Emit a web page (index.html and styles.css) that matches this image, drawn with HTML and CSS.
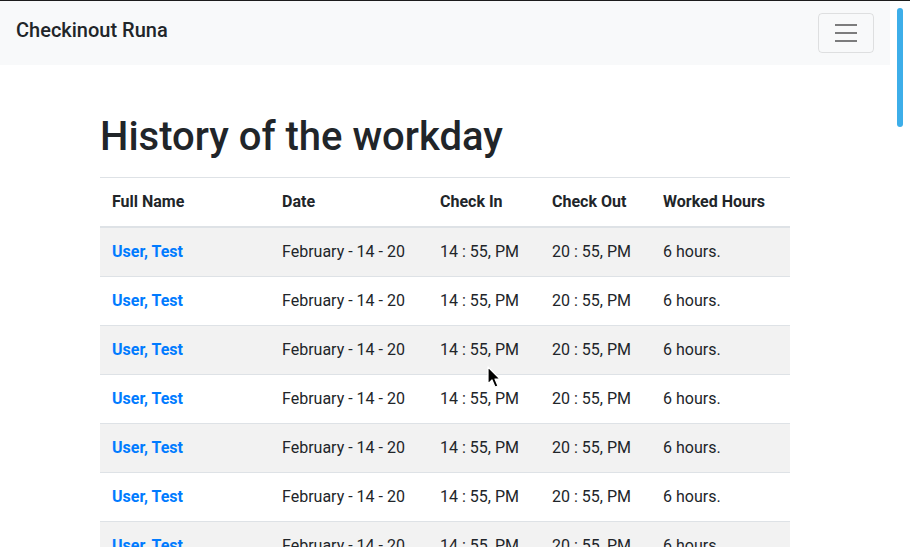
FILE: index.html
```html
<!DOCTYPE html>
<html lang="en">
<head>
<meta charset="utf-8">
<title>Checkinout Runa</title>
<link rel="stylesheet" href="styles.css">
</head>
<body>
<div class="topline"></div>
<div class="frame">
  <div class="page">
    <nav class="navbar">
      <a class="brand" href="#">Checkinout Runa</a>
      <button class="toggler" type="button" aria-label="Toggle navigation">
        <svg width="30" height="30" viewBox="0 0 30 30" aria-hidden="true">
          <path d="M4 7h22M4 15h22M4 23h22" stroke="rgba(0,0,0,0.5)" stroke-width="2" stroke-miterlimit="10"/>
        </svg>
      </button>
    </nav>
    <main class="container">
      <h1 class="title">History of the workday</h1>
      <table class="history">
        <thead>
          <tr>
            <th class="c-name">Full Name</th>
            <th class="c-date">Date</th>
            <th class="c-in">Check In</th>
            <th class="c-out">Check Out</th>
            <th class="c-hours">Worked Hours</th>
          </tr>
        </thead>
        <tbody>
          <tr><td><a href="#">User, Test</a></td><td>February - 14 - 20</td><td>14 : 55, PM</td><td>20 : 55, PM</td><td>6 hours.</td></tr>
          <tr><td><a href="#">User, Test</a></td><td>February - 14 - 20</td><td>14 : 55, PM</td><td>20 : 55, PM</td><td>6 hours.</td></tr>
          <tr><td><a href="#">User, Test</a></td><td>February - 14 - 20</td><td>14 : 55, PM</td><td>20 : 55, PM</td><td>6 hours.</td></tr>
          <tr><td><a href="#">User, Test</a></td><td>February - 14 - 20</td><td>14 : 55, PM</td><td>20 : 55, PM</td><td>6 hours.</td></tr>
          <tr><td><a href="#">User, Test</a></td><td>February - 14 - 20</td><td>14 : 55, PM</td><td>20 : 55, PM</td><td>6 hours.</td></tr>
          <tr><td><a href="#">User, Test</a></td><td>February - 14 - 20</td><td>14 : 55, PM</td><td>20 : 55, PM</td><td>6 hours.</td></tr>
          <tr><td><a href="#">User, Test</a></td><td>February - 14 - 20</td><td>14 : 55, PM</td><td>20 : 55, PM</td><td>6 hours.</td></tr>
          <tr><td><a href="#">User, Test</a></td><td>February - 14 - 20</td><td>14 : 55, PM</td><td>20 : 55, PM</td><td>6 hours.</td></tr>
        </tbody>
      </table>
    </main>
  </div>
  <div class="scrollbar"><div class="thumb"></div></div>
</div>
<svg class="cursor" width="16" height="24" viewBox="0 0 16 24" aria-hidden="true">
  <path d="M1 1 L1 18 L5 14 L8 21 L11 20 L8 13 L13 13 Z" fill="#000" stroke="#fff" stroke-width="1.2" stroke-linejoin="round"/>
</svg>
</body>
</html>
```

FILE: styles.css
```css
html, body {
  margin: 0;
  padding: 0;
  height: 100%;
  overflow: hidden;
  background: #fff;
}

body {
  font-family: Roboto, "Liberation Sans", Arial, sans-serif;
  font-size: 16px;
  line-height: 1.5;
  color: #212529;
}

.topline {
  height: 1px;
  background: #1c1c1c;
}

.frame {
  display: flex;
  height: calc(100% - 1px);
}

.page {
  width: 890px;
  flex: none;
}

.navbar {
  display: flex;
  align-items: center;
  justify-content: space-between;
  height: 64px;
  box-sizing: border-box;
  padding: 12px 16px;
  background: #f8f9fa;
}

.brand {
  font-size: 20px;
  font-weight: 500;
  line-height: 30px;
  color: #212529;
  text-decoration: none;
  margin-top: -7px;
}

.toggler {
  display: flex;
  align-items: center;
  justify-content: center;
  width: 56px;
  height: 40px;
  padding: 4px 12px;
  background: transparent;
  border: 1px solid rgba(0, 0, 0, 0.1);
  border-radius: 4px;
  box-sizing: border-box;
}

.toggler svg {
  display: block;
}

.container {
  width: 690px;
  margin: 0 auto;
  padding: 0 15px;
}

.title {
  margin: 48px 0 0;
  height: 64px;
  font-size: 40px;
  font-weight: 500;
  line-height: 48px;
}

.history {
  width: 690px;
  border-collapse: collapse;
  table-layout: fixed;
}

.history th,
.history td {
  padding: 12px;
  text-align: left;
  vertical-align: top;
  border-top: 1px solid #dee2e6;
  line-height: 24px;
  white-space: nowrap;
}

.history th {
  font-weight: 700;
  border-bottom: 2px solid #dee2e6;
}

.c-name { width: 146px; }
.c-date { width: 134px; }
.c-in { width: 88px; }
.c-out { width: 87px; }
.c-hours { width: 115px; }

.history tbody tr:nth-child(odd) {
  background: #f2f2f2;
}

.history a {
  color: #007bff;
  font-weight: 700;
  text-decoration: none;
}

.scrollbar {
  width: 20px;
  flex: none;
  background: #fff;
}

.thumb {
  width: 6px;
  height: 119px;
  margin: 7px 0 0 7px;
  border-radius: 3px;
  background: #3daee9;
}

.cursor {
  position: fixed;
  left: 487px;
  top: 366px;
}
```
